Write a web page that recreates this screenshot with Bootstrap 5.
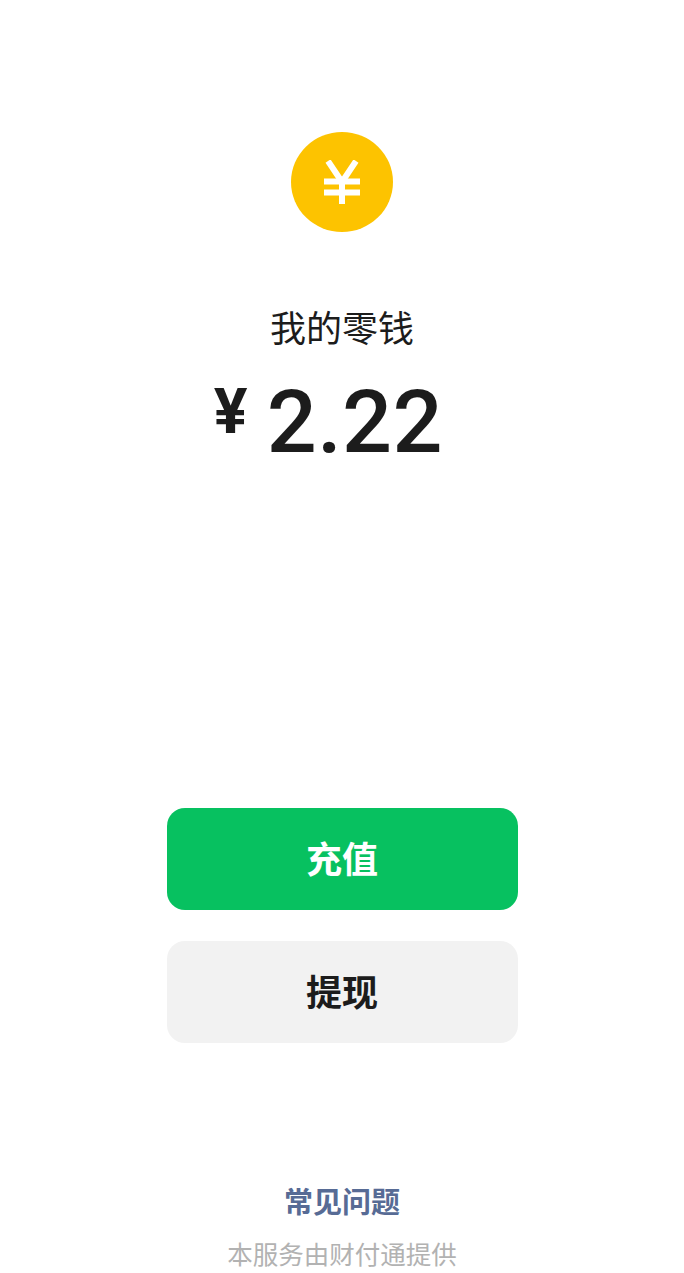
<!DOCTYPE html>
<html lang="zh-CN">
<head>
    <meta charset="UTF-8">
    <meta name="viewport" content="width=device-width, initial-scale=1.0">
    <title>我的零钱</title>
    <link href="https://cdn.jsdelivr.net/npm/bootstrap@5.3.0/dist/css/bootstrap.min.css" rel="stylesheet">
    <style>
        body { font-family: Roboto, "Noto Sans CJK SC", sans-serif; color: #1c1c1c; background: #fff; }
        .wallet-page { height: 1273px; padding-top: 132px; }
        .coin { width: 102px; height: 102px; background: #fdc300; }
        .balance-title { font-size: 36px; line-height: 48px; margin-top: 74px; }
        .balance-amount { margin-top: 22px; height: 92px; gap: 19px; margin-right: 27px; }
        .balance-sign { font-size: 63px; font-weight: 700; line-height: 72px; }
        .balance-value { font-size: 88px; font-weight: 500; line-height: 92px; letter-spacing: .5px; }
        .wallet-actions { width: 351px; margin-top: 340px; gap: 31px; }
        .wallet-btn { height: 102px; font-size: 36px; font-weight: 700; border: 0; border-radius: 18px; padding: 3px 0 0; }
        .wallet-btn-green, .wallet-btn-green:hover { background: #07c160; color: #fff; }
        .wallet-btn-grey, .wallet-btn-grey:hover { background: #f2f2f2; color: #1c1c1c; }
        .faq-link { font-size: 29px; font-weight: 700; line-height: 40px; color: #576b95; margin-top: 140px; }
        .service-note { font-size: 25.5px; line-height: 36px; color: #b2b2b2; margin-top: 14px; }
    </style>
</head>
<body>
    <div class="wallet-page d-flex flex-column align-items-center">
        <div class="coin rounded-circle d-flex align-items-center justify-content-center">
            <svg width="38" height="44" viewBox="0 0 38 44" fill="none" stroke="#fff" stroke-width="6">
                <path d="M5 1 L19 22 L33 1"/>
                <path d="M19 20 V44"/>
                <path d="M1 21.5 H37"/>
                <path d="M1 32.5 H37"/>
            </svg>
        </div>
        <div class="balance-title">我的零钱</div>
        <div class="balance-amount d-flex">
            <span class="balance-sign">¥</span>
            <span class="balance-value">2.22</span>
        </div>
        <div class="wallet-actions d-flex flex-column">
            <button type="button" class="btn wallet-btn wallet-btn-green">充值</button>
            <button type="button" class="btn wallet-btn wallet-btn-grey">提现</button>
        </div>
        <a href="#" class="faq-link text-decoration-none">常见问题</a>
        <div class="service-note">本服务由财付通提供</div>
    </div>
    <script src="https://cdn.jsdelivr.net/npm/bootstrap@5.3.0/dist/js/bootstrap.bundle.min.js"></script>
</body>
</html>
